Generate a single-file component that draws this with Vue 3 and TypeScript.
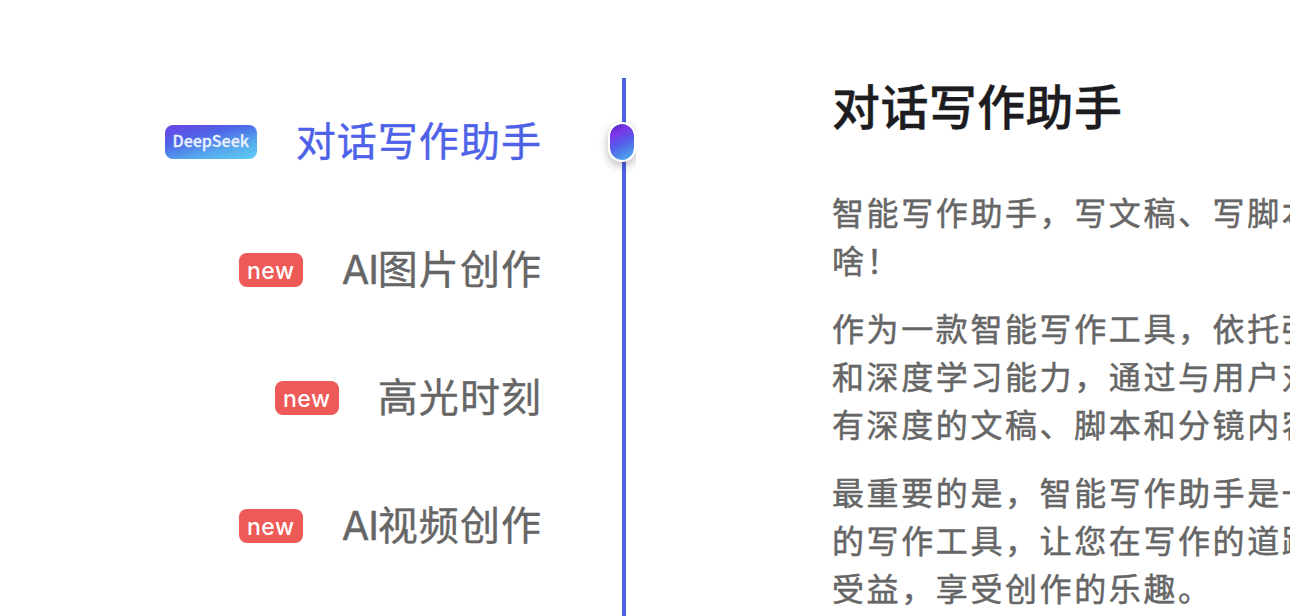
<script setup lang="ts">
import { ref } from 'vue'

interface MenuItem {
  name: string
  tag: string
  kind: 'deepseek' | 'new'
}

const items: MenuItem[] = [
  { name: '对话写作助手', tag: 'DeepSeek', kind: 'deepseek' },
  { name: 'AI图片创作', tag: 'new', kind: 'new' },
  { name: '高光时刻', tag: 'new', kind: 'new' },
  { name: 'AI视频创作', tag: 'new', kind: 'new' },
]

const paragraphs: string[][] = [
  ['智能写作助手，写文稿、写脚本', '啥！'],
  ['作为一款智能写作工具，依托强', '和深度学习能力，通过与用户对', '有深度的文稿、脚本和分镜内容'],
  ['最重要的是，智能写作助手是一', '的写作工具，让您在写作的道路', '受益，享受创作的乐趣。'],
]

const active = ref(0)
</script>

<template>
  <main class="page">
    <ul class="menu">
      <li
        v-for="(item, i) in items"
        :key="item.name"
        class="menu-item"
        :class="{ active: i === active }"
        @click="active = i"
      >
        <span class="tag" :class="item.kind">{{ item.tag }}</span>
        <span class="name">
          <template v-if="item.name.startsWith('AI')"><span class="latin">AI</span>{{ item.name.slice(2) }}</template>
          <template v-else>{{ item.name }}</template>
        </span>
      </li>
    </ul>
    <div class="rail">
      <div class="line" />
      <div class="thumb-clip" :style="{ top: `${active * 128 + 34}px` }">
        <div class="thumb" />
      </div>
    </div>
    <article class="content">
      <h1>{{ items[0].name }}</h1>
      <p v-for="(lines, i) in paragraphs" :key="i">
        <span v-for="line in lines" :key="line">{{ line }}</span>
      </p>
    </article>
  </main>
</template>

<style>
body {
  margin: 0;
  background: #fff;
  overflow: hidden;
}
</style>

<style scoped>
.page {
  display: grid;
  grid-template-columns: 542px 28px 1fr;
  height: 616px;
  padding-top: 78px;
  box-sizing: border-box;
  overflow: hidden;
  font-family: "Noto Sans CJK SC", sans-serif;
  color: #666;
}

.menu {
  margin: 0;
  padding: 0;
  list-style: none;
}

.menu-item {
  display: flex;
  align-items: center;
  justify-content: flex-end;
  height: 128px;
  cursor: pointer;
}

.name {
  margin-left: 39px;
  padding-bottom: 6px;
  font-size: 40px;
  line-height: 56px;
  letter-spacing: 1.05px;
  white-space: nowrap;
  -webkit-text-stroke: 0.4px currentColor;
}

.latin {
  font-family: Inter, sans-serif;
  font-size: 40px;
  line-height: 1;
  letter-spacing: -1.2px;
}

.active .name {
  color: #4e62e8;
}

.tag {
  display: flex;
  align-items: center;
  justify-content: center;
  box-sizing: border-box;
  height: 34px;
  border-radius: 8px;
  color: #fff;
  font-weight: 500;
}

.new {
  width: 64px;
  padding-top: 1px;
  background: #ed5a58;
  font-family: Inter, sans-serif;
  font-size: 23px;
  letter-spacing: 0.6px;
}

.deepseek {
  width: 92px;
  padding-bottom: 4px;
  background: linear-gradient(165deg, #6845e7 5%, #4e65e7 35%, #54a7ed 68%, #61cef3 100%);
  color: #e9f0ff;
  font-size: 16px;
  -webkit-text-stroke: 0.3px currentColor;
}

.rail {
  position: relative;
  margin-left: 66px;
  margin-right: -66px;
}

.line {
  width: 4px;
  height: 538px;
  margin-left: 14px;
  background: #4e60e4;
}

.thumb-clip {
  position: absolute;
  left: -12px;
  width: 40px;
  height: 80px;
  padding: 10px 0 0 12px;
  box-sizing: border-box;
  overflow: hidden;
}

.thumb {
  box-sizing: border-box;
  width: 28px;
  height: 40px;
  border: 2px solid #fff;
  border-radius: 14px;
  background: linear-gradient(152deg, #5a28c0 8%, #7c35ea 25%, #5160e8 55%, #4eabee 92%) padding-box;
  box-shadow: 0 4px 10px rgba(0, 0, 0, 0.28);
}

.content {
  margin-top: -3px;
  margin-left: 262px;
  white-space: nowrap;
}

.content h1 {
  margin: 0 0 54px;
  color: #1d1c21;
  font-size: 48px;
  font-weight: 500;
  line-height: 58px;
  letter-spacing: 0.4px;
  -webkit-text-stroke: 0.4px currentColor;
}

.content p {
  margin: 0 0 20px;
  font-size: 32px;
  line-height: 48px;
  letter-spacing: 2.6px;
  -webkit-text-stroke: 0.5px currentColor;
}

.content p span {
  display: block;
}
</style>
